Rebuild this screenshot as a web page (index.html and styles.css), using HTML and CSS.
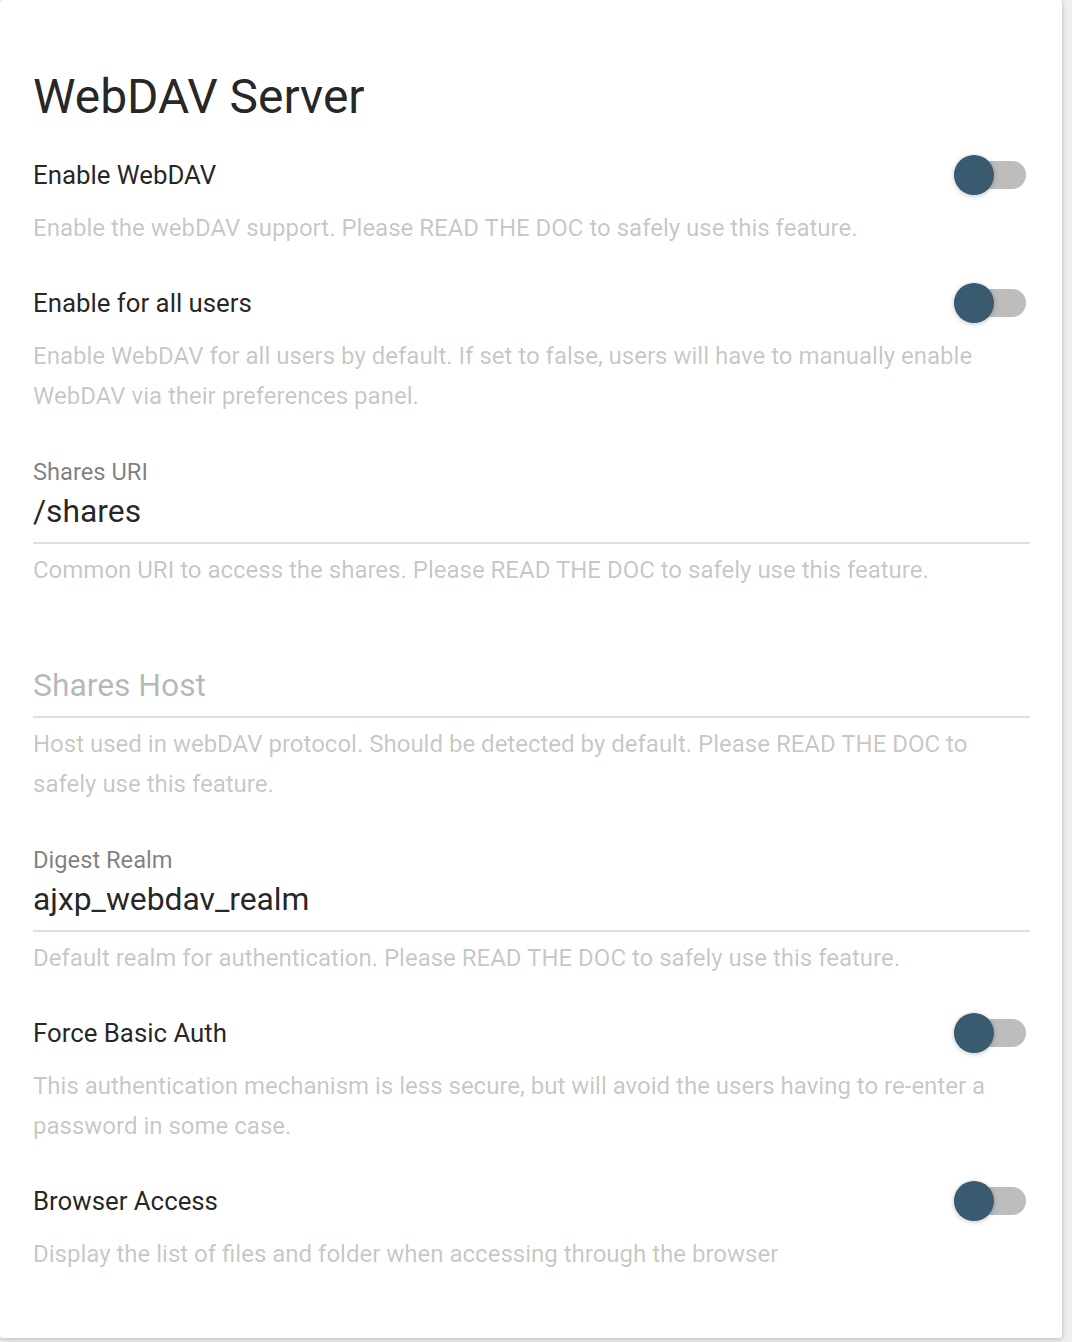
FILE: index.html
```html
<!DOCTYPE html>
<html lang="en">
<head>
<meta charset="utf-8">
<title>WebDAV Server</title>
<link rel="stylesheet" href="styles.css">
</head>
<body>
<div class="card">
  <h1 class="title">WebDAV Server</h1>

  <section class="item">
    <div class="toggle-row">
      <span class="label">Enable WebDAV</span>
      <span class="toggle"><span class="track"></span><span class="thumb"></span></span>
    </div>
    <p class="desc">Enable the webDAV support. Please READ THE DOC to safely use this feature.</p>
  </section>

  <section class="item">
    <div class="toggle-row">
      <span class="label">Enable for all users</span>
      <span class="toggle"><span class="track"></span><span class="thumb"></span></span>
    </div>
    <p class="desc">Enable WebDAV for all users by default. If set to false, users will have to manually enable WebDAV via their preferences panel.</p>
  </section>

  <section class="item field">
    <div class="float-label">Shares URI</div>
    <div class="value">/shares</div>
    <div class="underline"></div>
    <p class="desc field-desc">Common URI to access the shares. Please READ THE DOC to safely use this feature.</p>
  </section>

  <section class="item field">
    <div class="float-label"></div>
    <div class="value placeholder">Shares Host</div>
    <div class="underline"></div>
    <p class="desc field-desc">Host used in webDAV protocol. Should be detected by default. Please READ THE DOC to safely use this feature.</p>
  </section>

  <section class="item field">
    <div class="float-label">Digest Realm</div>
    <div class="value">ajxp_webdav_realm</div>
    <div class="underline"></div>
    <p class="desc field-desc">Default realm for authentication. Please READ THE DOC to safely use this feature.</p>
  </section>

  <section class="item">
    <div class="toggle-row">
      <span class="label">Force Basic Auth</span>
      <span class="toggle"><span class="track"></span><span class="thumb"></span></span>
    </div>
    <p class="desc">This authentication mechanism is less secure, but will avoid the users having to re-enter a password in some case.</p>
  </section>

  <section class="item last">
    <div class="toggle-row">
      <span class="label">Browser Access</span>
      <span class="toggle"><span class="track"></span><span class="thumb"></span></span>
    </div>
    <p class="desc">Display the list of files and folder when accessing through the browser</p>
  </section>
</div>
</body>
</html>
```

FILE: styles.css
```css
html, body {
  margin: 0;
  padding: 0;
  background: #efefef;
}

body {
  font-family: Roboto, "Liberation Sans", sans-serif;
  width: 1072px;
  height: 1342px;
}

.card {
  width: 1062px;
  height: 1338px;
  box-sizing: border-box;
  background: #ffffff;
  border-radius: 3px;
  box-shadow: 0 1px 6px rgba(0, 0, 0, 0.12), 0 1px 4px rgba(0, 0, 0, 0.12);
  padding: 72px 32px 0 33px;
  display: flex;
  flex-direction: column;
}

.title {
  margin: 0 0 29px 0;
  font-size: 47.9px;
  line-height: 50px;
  font-weight: 400;
  color: rgba(0, 0, 0, 0.87);
}

.item {
  display: flex;
  flex-direction: column;
  margin-bottom: 31px;
}

.item.last {
  margin-bottom: 0;
}

.toggle-row {
  display: flex;
  align-items: center;
  justify-content: space-between;
  height: 48px;
}

.label {
  font-size: 25.8px;
  color: rgba(0, 0, 0, 0.87);
}

.toggle {
  position: relative;
  width: 72px;
  height: 40px;
  margin-right: 4px;
}

.track {
  position: absolute;
  left: 0;
  right: 0;
  top: 6px;
  height: 28px;
  border-radius: 14px;
  background: #bdbdbd;
}

.thumb {
  position: absolute;
  left: 0;
  top: 0;
  width: 40px;
  height: 40px;
  border-radius: 50%;
  background: #3a5a70;
  box-shadow: 0 1px 6px rgba(0, 0, 0, 0.12), 0 1px 4px rgba(0, 0, 0, 0.12);
}

.desc {
  margin: 9px 0 0 0;
  font-size: 24px;
  line-height: 40px;
  color: rgba(0, 0, 0, 0.24);
}

.field {
  padding-top: 10px;
}

.float-label {
  height: 30px;
  font-size: 23.7px;
  line-height: 30px;
  color: rgba(0, 0, 0, 0.5);
}

.value {
  margin-top: 2px;
  height: 44px;
  font-size: 31.8px;
  line-height: 44px;
  color: rgba(0, 0, 0, 0.87);
}

.value.placeholder {
  color: rgba(0, 0, 0, 0.3);
}

.underline {
  margin-top: 9px;
  height: 2px;
  background: #e0e0e0;
}

.field-desc {
  margin-top: 6px;
}
```
